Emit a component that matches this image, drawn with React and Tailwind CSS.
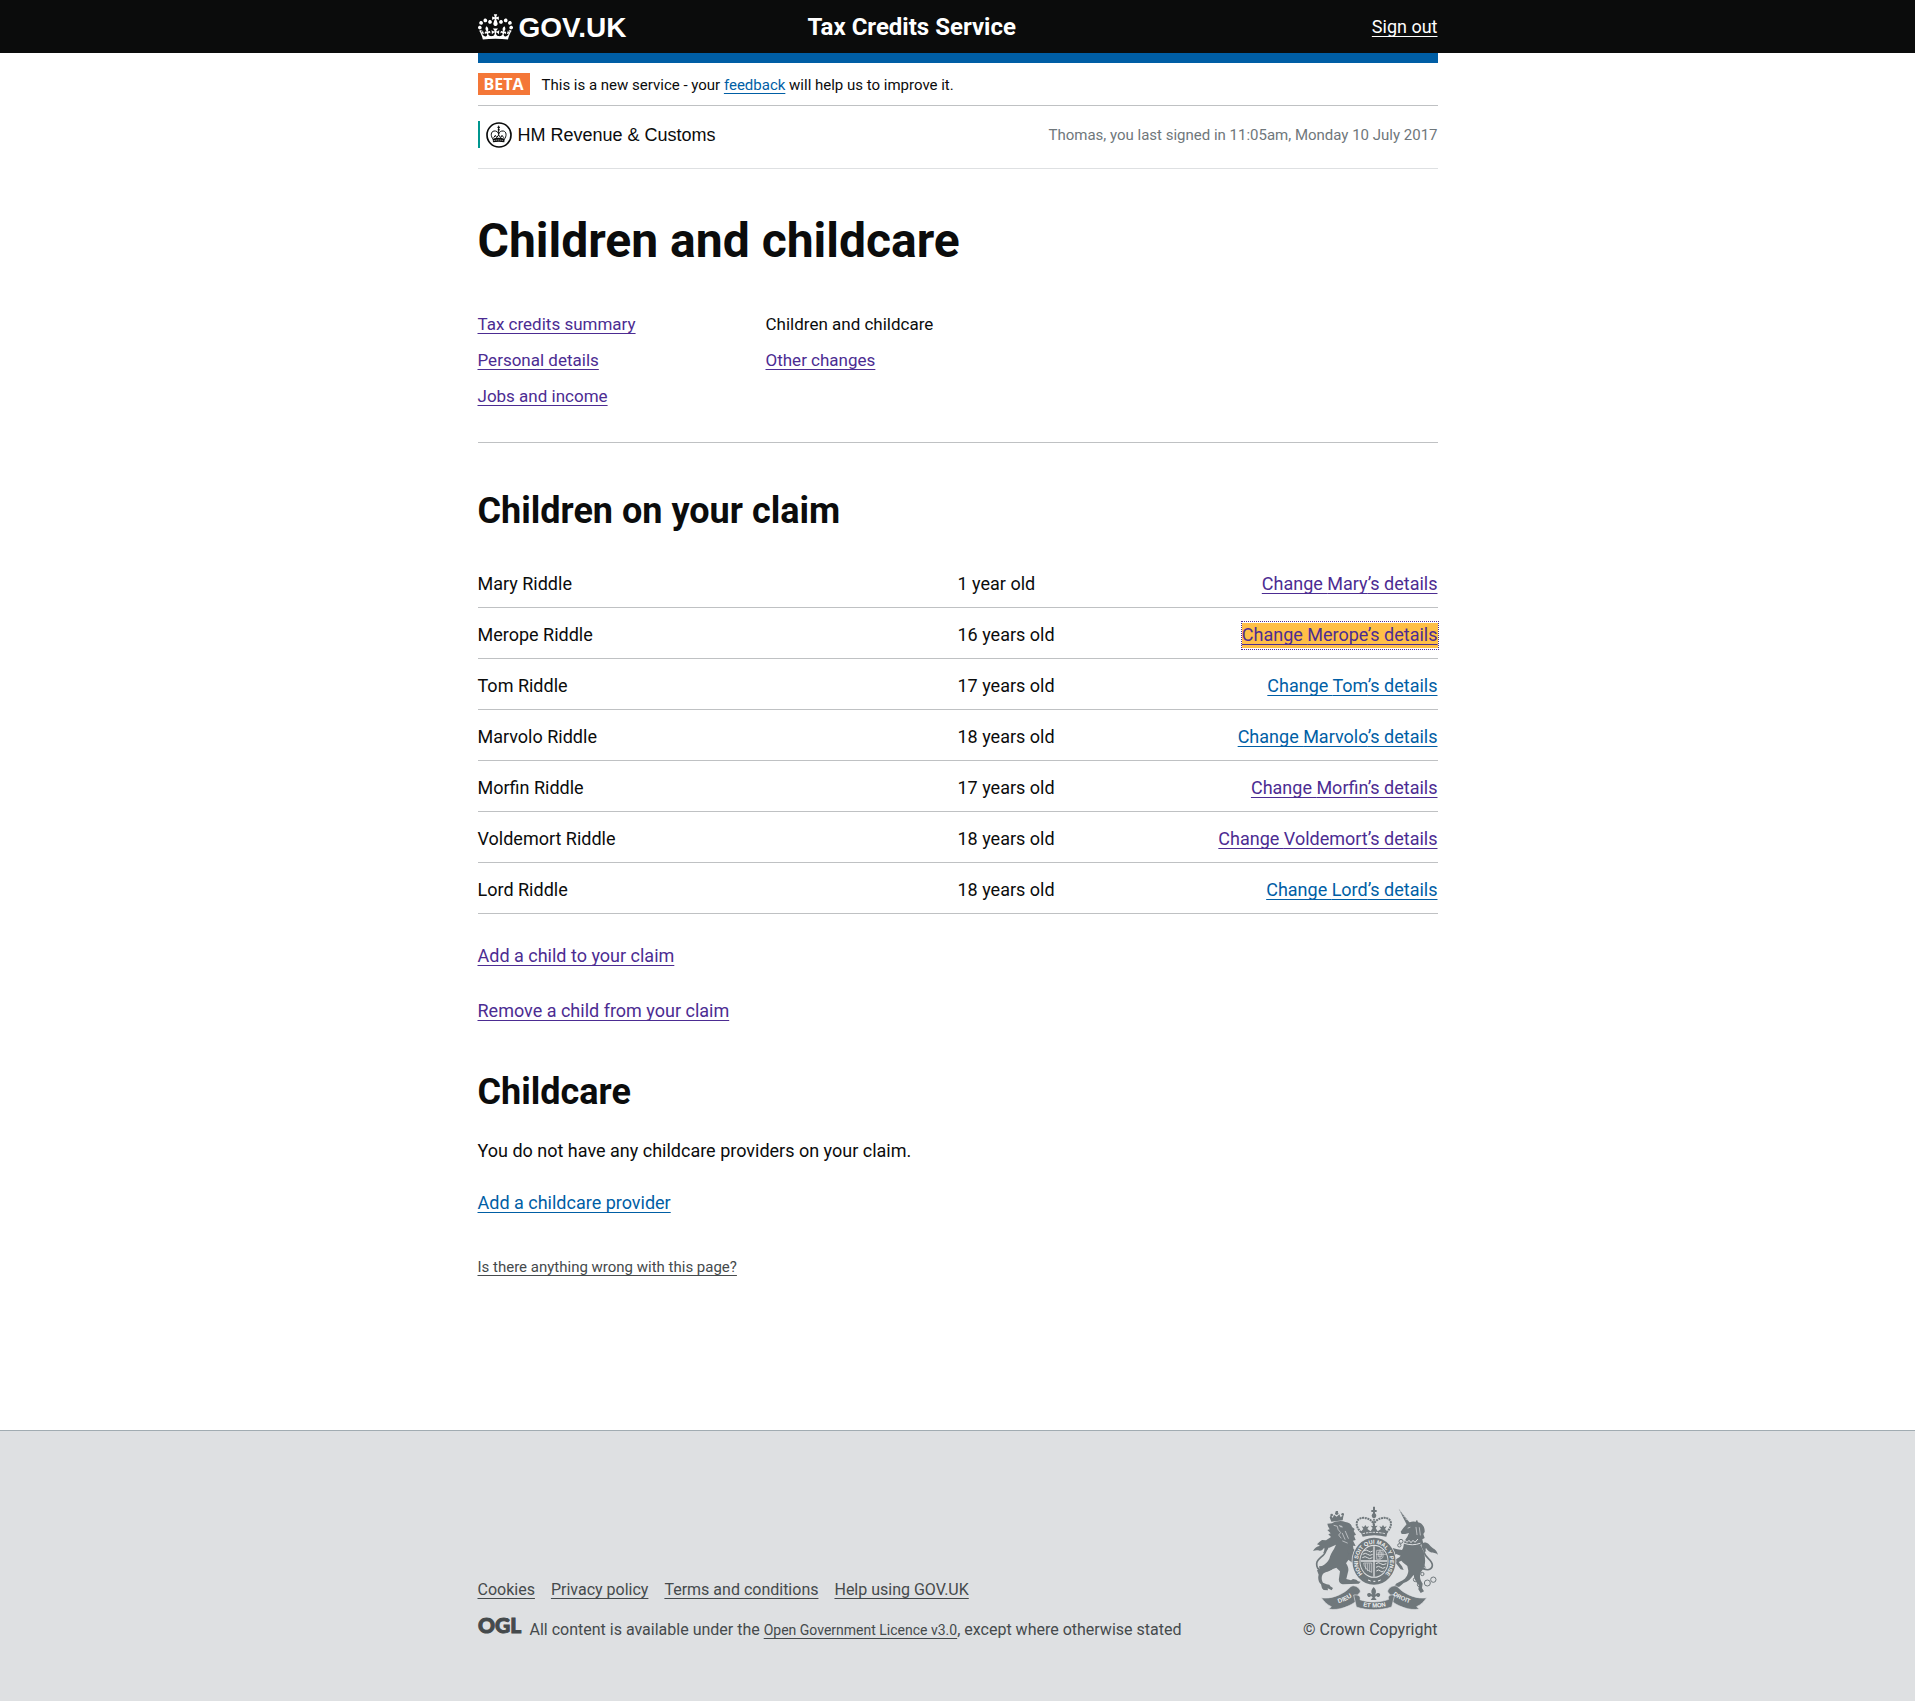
const navLinks = [
  ['Tax credits summary', 'Personal details', 'Jobs and income'],
  ['Children and childcare', 'Other changes'],
];

const children = [
  { first: 'Mary', age: '1 year old', state: 'visited' },
  { first: 'Merope', age: '16 years old', state: 'focused' },
  { first: 'Tom', age: '17 years old', state: 'new' },
  { first: 'Marvolo', age: '18 years old', state: 'new' },
  { first: 'Morfin', age: '17 years old', state: 'visited' },
  { first: 'Voldemort', age: '18 years old', state: 'visited' },
  { first: 'Lord', age: '18 years old', state: 'new' },
];

const footerLinks = ['Cookies', 'Privacy policy', 'Terms and conditions', 'Help using GOV.UK'];

const underline =
  'underline decoration-1 underline-offset-3 [text-decoration-skip-ink:none]';

const tones = {
  new: 'text-[#005ea5]',
  visited: 'text-[#4c2c92]',
  focused:
    'border-y border-transparent bg-[#ffbf47] bg-clip-padding pt-px pb-[3px] text-[#4c2c92] outline-1 outline-dotted outline-[#4c2c92]',
  muted: 'text-[#454a4c]',
  white: 'text-white',
};

function Link({ tone = 'new', children: label }) {
  return (
    <a href="#" className={`${underline} ${tones[tone]}`}>
      {label}
    </a>
  );
}

function Crown() {
  return (
    <svg viewBox="0 0 132 97" className="h-[26px] w-[35px]" fill="currentColor" aria-hidden="true">
      <path
        fillRule="evenodd"
        d="M25 30.2c3.5 1.5 7.7-.2 9.1-3.7 1.5-3.6-.2-7.8-3.9-9.2-3.6-1.4-7.6.3-9.1 3.9-1.4 3.5.3 7.5 3.9 9zM9 39.5c3.6 1.5 7.8-.2 9.2-3.7 1.5-3.6-.2-7.8-3.9-9.1-3.6-1.5-7.6.2-9.1 3.8-1.4 3.5.3 7.5 3.8 9zM4.4 57.2c3.5 1.5 7.7-.2 9.1-3.8 1.5-3.6-.2-7.7-3.9-9.1-3.5-1.5-7.6.3-9.1 3.8-1.4 3.5.3 7.6 3.9 9.1zm38.3-21.4c3.5 1.5 7.7-.2 9.1-3.8 1.5-3.6-.2-7.7-3.9-9.1-3.6-1.5-7.6.3-9.1 3.8-1.3 3.6.4 7.7 3.9 9.1zm64.4-5.6c-3.6 1.5-7.8-.2-9.1-3.7-1.5-3.6.2-7.8 3.8-9.2 3.6-1.4 7.7.3 9.2 3.9 1.3 3.5-.4 7.5-3.9 9zm15.9 9.3c-3.6 1.5-7.7-.2-9.1-3.7-1.5-3.6.2-7.8 3.7-9.1 3.6-1.5 7.7.2 9.2 3.8 1.5 3.5-.3 7.5-3.8 9zm4.7 17.7c-3.6 1.5-7.8-.2-9.2-3.8-1.5-3.6.2-7.7 3.9-9.1 3.6-1.5 7.7.3 9.2 3.8 1.3 3.5-.4 7.6-3.9 9.1zM89.3 35.8c-3.6 1.5-7.8-.2-9.2-3.8-1.4-3.6.2-7.7 3.9-9.1 3.6-1.5 7.7.3 9.2 3.8 1.4 3.6-.3 7.7-3.9 9.1zM69.7 17.7l8.9 4.7V9.3l-8.9 2.8c-.2-.3-.5-.6-.9-.9L72.4 0H59.6l3.5 11.2c-.3.3-.6.5-.9.9l-8.8-2.8v13.1l8.8-4.7c.3.3.6.7.9.9l-5 15.4v.1c-.2.8-.4 1.6-.4 2.4 0 4.1 3.1 7.5 7 8.1h.2c.3 0 .7.1 1 .1.4 0 .7 0 1-.1h.2c4-.6 7.1-4.1 7.1-8.1 0-.8-.1-1.7-.4-2.4V34l-5.1-15.4c.4-.2.7-.6 1-.9zM66 92.8c16.9 0 32.8 1.1 47.1 3.2 4-16.9 8.9-26.7 14-33.5l-9.6-3.4c1 4.9 1.1 7.2 0 10.2-1.5-1.4-3-4.3-4.2-8.7L108.6 76c2.8-2 5-3.2 7.5-3.3-4.4 9.4-10 11.9-13.6 11.2-4.3-.8-6.3-4.6-5.6-7.9 1-4.7 5.7-5.9 8-.5 4.3-8.7-3-11.4-7.6-8.8 7.1-7.2 7.9-13.5 2.1-21.1-8 6.1-8.1 12.3-4.5 20.8-4.7-5.4-12.1-2.5-9.5 6.2 3.4-5.2 7.9-2 7.2 3.1-.6 4.3-6.4 7.8-13.5 7.2-10.3-.9-10.9-8-11.2-13.8 2.5-.5 7.1 1.8 11 7.3L80.2 60c-4.1 4.4-8 5.3-12.3 5.4 1.4-4.4 8-11.6 8-11.6H55.5s6.4 7.2 7.9 11.6c-4.2-.1-8-1-12.3-5.4l1.4 16.4c3.9-5.5 8.5-7.7 10.9-7.3-.3 5.8-.9 12.8-11.1 13.8-7.2.6-12.9-2.9-13.5-7.2-.7-5 3.8-8.3 7.1-3.1 2.7-8.7-4.6-11.6-9.4-6.2 3.7-8.5 3.6-14.7-4.6-20.8-5.8 7.6-5 13.9 2.2 21.1-4.7-2.6-11.9.1-7.7 8.8 2.3-5.5 7.1-4.2 8.1.5.7 3.3-1.3 7.1-5.7 7.9-3.5.7-9-1.8-13.5-11.2 2.5.1 4.7 1.3 7.5 3.3l-4.7-15.4c-1.2 4.4-2.7 7.2-4.3 8.7-1.1-3-.9-5.3 0-10.2l-9.5 3.4c5 6.9 9.9 16.7 14 33.5 14.8-2.1 30.8-3.2 47.7-3.2z"
      />
    </svg>
  );
}

function HmrcCrest() {
  return (
    <svg viewBox="0 0 78 81" className="h-[27px] w-[26px]" aria-hidden="true">
      <circle cx="39" cy="42" r="36" fill="#fff" stroke="#0b0c0c" strokeWidth="5" />
      <g fill="none" stroke="#0b0c0c" strokeWidth="3">
        <path d="M22 56C13 45 14 32 24 30c7-1 12 3 14 9 2-6 7-10 14-9 10 2 11 15 2 26" />
        <path d="M38 24v18M34 19h8M38 14v10" />
        <path d="M23 50l5-7 4 7 6-8 6 8 4-7 5 7" />
      </g>
      <circle cx="38" cy="26" r="3" fill="#0b0c0c" />
      <path d="M20 53q18-5 36 0l-1 11q-17-4-34 0z" fill="#0b0c0c" />
      <path d="M23 59q15-4 30 0" fill="none" stroke="#fff" strokeWidth="2" strokeDasharray="4 2" />
    </svg>
  );
}

function RoyalArms() {
  return (
    <svg viewBox="9 16 375 312" className="h-[104px] w-[125px]" aria-hidden="true">
      <defs>
        <path id="garter" d="M158 220A48 53 0 1 1 226 220" />
        <path id="dieu" d="M78 310Q115 301 142 276" />
        <path id="mon" d="M150 314Q192 327 234 314" />
        <path id="droit" d="M244 278Q270 301 310 310" />
      </defs>

      {/* Tails */}
      <g fill="none" stroke="#6f777b" strokeLinecap="round">
        <path d="M64 205C42 219 19 209 20 189c1-17 24-22 27-37 2-8-2-15-8-18" strokeWidth="5" />
        <path d="M335 199c10 12 30 11 32-4 2-16-20-23-24-38-2-10 3-19 9-23" strokeWidth="5" />
      </g>
      <path
        d="M57 128c-10-8-22-3-29 8-7 2-14 5-19 15 8-3 14-2 20-1 7 0 11-5 14-12 1 7 0 14-4 20 12-4 20-16 18-30z"
        fill="#6f777b"
      />
      <path
        d="M335 139c-2-9 5-15 14-13 8 2 10 9 18 15 8 5 15 10 17 22-7-8-14-5-22-8-8-4-12-9-15-15-2 5 0 9 2 14-7-3-12-8-14-15z"
        fill="#6f777b"
      />

      {/* Lion */}
      <g fill="#6f777b">
        <path d="M63 44l5 8 4-10 8 6 8-7 4 9 9-8-3 17-34 4-5-13z" />
        <circle cx="80" cy="38" r="5" />
        <circle cx="65" cy="43" r="4" />
        <circle cx="98" cy="41" r="4" />
        <path d="M77 31h7v4h-7z" />
        <path d="M66 68c11-7 29-9 40-4 11 1 19 7 20 15l8 6-3 6 7 11-6 3 5 13-8 2 8 16-8-1c3 15 2 25-9 36l-12 17c6 8 9 18 6 26l-5 21 14 4 6-4 10 2 5 5 8 1-6 6-48 2c-8-2-13-9-11-18l3-21-11-11-20 8-18 9c-8 8-7 20-2 28l11 5 8 1 3 5 8 5-4 7-12-6 1 6-13-1-5-5-3-12c-8-7-10-19-7-29l-5-13 8-3-2-9 9-1c9-5 18-12 22-22 3-12 8-20 14-29l6-13-20 9-12-2-8 6-4-7-5 3v-7l-8-3 7-7 8-6 12 1 15-10-8-8 7-3-10-10 7-2-5-9-2-8z" />
        <path d="M118 137l21 14 7 19-6 10-20-15-9-14z" />
        <path d="M118 158c9 10 20 12 30 20l5 8-9 1-4 9-9-3-6-8-16-12z" />
      </g>
      <g fill="none" stroke="#dee0e2" strokeWidth="2" strokeLinecap="round">
        <path d="M72 74l10 3 2 9 8 10-6 7 7 9" />
        <path d="M88 75l7 2M91 78l6 1" />
        <path d="M97 98l8 18M106 92l9 21M98 121l14 6" />
      </g>

      {/* Unicorn */}
      <g fill="#6f777b">
        <path d="M266 24l34 43-9 7z" />
        <path d="M290 71C298 64 308 61 316 64L321 57L324 65C338 68 345 80 344 94L340 100L344 112L337 116L340 130L331 133C341 148 347 168 345 186C344 202 336 208 331 218C328 228 331 240 338 249L336 262L342 272L332 277L325 266L327 254C318 244 312 234 311 222C303 234 294 243 281 247L268 258L252 260L258 249L272 242C286 236 294 224 295 210L292 196C286 190 279 186 274 180L266 184L276 197L281 208L272 206L258 188L254 178L268 170L272 165L258 160L252 166L243 160L240 150L248 142L262 146L276 148C282 140 280 130 284 120L292 108L297 97L286 100L275 100L272 93L280 82Z" />
      </g>
      <g fill="none" stroke="#dee0e2" strokeLinecap="round">
        <path d="M270 31l4 2M276 39l4 2M281 47l5 2M287 55l5 2" strokeWidth="2" />
        <path d="M283 128q24 9 47 0" strokeWidth="3" />
        <path d="M285 119l6 6 6-6 6 7 6-7 6 6 8-9" strokeWidth="3" />
        <path d="M294 82l6-2M318 80l3 22M328 81l3 22" strokeWidth="2" />
      </g>
      <g fill="none" stroke="#6f777b" strokeWidth="3">
        <circle cx="273" cy="122" r="6" />
        <circle cx="268" cy="134" r="5" />
        <circle cx="339" cy="200" r="6" />
        <circle cx="337" cy="220" r="5" />
        <circle cx="316" cy="237" r="6" />
        <circle cx="328" cy="252" r="6" />
        <circle cx="352" cy="247" r="9" />
        <circle cx="370" cy="237" r="8" />
      </g>

      {/* Motto scroll */}
      <g fill="#6f777b" stroke="#dee0e2" strokeWidth="2">
        <path d="M34 291C60 296 98 284 122 258C132 250 152 262 151 274L141 285L147 296C120 318 85 331 56 325L64 318C50 312 42 302 34 291Z" />
        <path d="M350 291C324 296 286 284 262 258C252 250 232 262 233 274L243 285L237 296C264 318 299 331 328 325L320 318C334 312 342 302 350 291Z" />
        <path d="M131 283c14-2 22 4 19 14 26 9 57 10 86-1-4-9 4-16 18-13l-9 36c-34 11-74 11-106 0z" />
      </g>
      <g
        fill="#eef0f1"
        fontFamily="Liberation Sans, sans-serif"
        fontWeight="700"
      >
        <text fontSize="19"><textPath href="#dieu" startOffset="8">DIEU</textPath></text>
        <text fontSize="18"><textPath href="#mon" startOffset="9">ET MON</textPath></text>
        <text fontSize="18"><textPath href="#droit" startOffset="6">DROIT</textPath></text>
      </g>
      <path
        d="M191 259c8 8 9 15 4 23 9-9 18-5 15 3-2 5-8 6-11 1l-5 4 6 8h-18l6-8-5-4c-3 5-9 4-11-1-3-8 6-12 15-3-5-8-4-15 4-23z"
        fill="#6f777b"
      />

      {/* Garter and shield */}
      <ellipse cx="192" cy="182" rx="67" ry="73" fill="#dee0e2" />
      <ellipse cx="192" cy="182" rx="54" ry="60" fill="none" stroke="#6f777b" strokeWidth="21" />
      <text
        fill="#eef0f1"
        fontFamily="Liberation Sans, sans-serif"
        fontSize="17"
        fontWeight="700"
      >
        <textPath href="#garter">HONI SOIT QUI MAL Y PENSE</textPath>
      </text>
      <path d="M174 238l8 3M190 242h6M204 241l8-3" stroke="#eef0f1" strokeWidth="3" />
      <ellipse cx="192" cy="182" rx="41" ry="46" fill="#6f777b" />
      <g fill="none" stroke="#dee0e2">
        <path d="M192 137v91M152 181h80" strokeWidth="4" />
        <path
          d="M161 151q8-6 14 0t13 0M158 161q9-6 15 0t15 0M157 171q9-6 15 0t15 0M198 189q8-6 14 0t17 0M198 200q8-6 14 0t14 0M199 211q7-6 12 0t10 0"
          strokeWidth="3"
        />
        <path d="M200 149h19v21q-4 7-19 6zM205 154h10v14h-10zM210 146v30M198 161h30" strokeWidth="2" />
        <path d="M161 187h24v28q-16-5-22-20zM167 188v18M173 188v23M179 188v25" strokeWidth="2" />
      </g>

      {/* Crown */}
      <g fill="none" stroke="#6f777b">
        <path d="M154 95C136 81 136 58 151 53c16-5 35 3 40 18 6-15 25-23 41-18 15 5 15 28-3 42" strokeWidth="6" strokeDasharray="6 2" />
        <path d="M192 48v46" strokeWidth="5" strokeDasharray="5 2" />
        <path d="M184 31h16M192 18v23" strokeWidth="6" />
      </g>
      <g fill="#6f777b">
        <circle cx="192" cy="45" r="7" />
        <path d="M152 94l8-9-5-8 7 2 4-6 4 6 7-2-5 8 10 7 6-10-6-7 7 1 3-7 4 7 7-1-6 7 6 10 10-7-5-8 7 2 4-6 4 6 7-2-5 8 8 9-4 14q-36-9-71 0z" />
      </g>
      <path d="M158 99q34-8 67 0" fill="none" stroke="#dee0e2" strokeWidth="3" strokeDasharray="7 3" />
    </svg>
  );
}

function OglLogo() {
  return (
    <svg viewBox="0 0 48 28" className="h-7 w-12 overflow-visible" role="img" aria-label="Open Government Licence">
      <text
        x="0"
        y="21"
        fill="#454a4c"
        stroke="#454a4c"
        strokeWidth="1"
        fontFamily="Lato, sans-serif"
        fontSize="21"
        fontWeight="900"
      >
        OGL
      </text>
    </svg>
  );
}

export default function App() {
  return (
    <div className="flex min-h-screen flex-col bg-white font-[Roboto,sans-serif] text-lg/[25px] text-[#0b0c0c]">
      <header className="bg-[#0b0c0c] text-white">
        <div className="mx-auto grid h-[53px] w-full max-w-[960px] grid-cols-[330px_1fr_auto] items-center">
          <a href="#" className="flex items-center gap-1.5 font-['Liberation_Sans',sans-serif] text-[28px]/8 font-bold">
            <Crown />
            <span className="pt-0.5">GOV.UK</span>
          </a>
          <span className="text-2xl/8 font-bold">Tax Credits Service</span>
          <Link tone="white">Sign out</Link>
        </div>
      </header>

      <main className="mx-auto w-full max-w-[960px] flex-1 pb-[153px]">
        <div className="h-2.5 bg-[#005ea5]" />
        <div className="flex items-center gap-3 border-b border-[#bfc1c3] py-2.5 text-[15px]/5">
          <strong className="bg-[#f47738] px-1.5 font-['Open_Sans',sans-serif] text-base/[22px] font-bold text-white">
            BETA
          </strong>
          <p className="pt-0.5">
            This is a new service - your <Link>feedback</Link> will help us to improve it.
          </p>
        </div>
        <div className="flex items-center justify-between border-b border-[#dee0e2] pt-[15px] pb-5">
          <div className="flex items-center border-l-2 border-[#00968f] pl-1.5 font-['Liberation_Sans',sans-serif] text-lg/[25px]">
            <HmrcCrest />
            <span className="ml-1.5 pt-0.5">HM Revenue &amp; Customs</span>
          </div>
          <p className="pt-0.5 text-[15px]/[25px] text-[#6f777b]">
            Thomas, you last signed in 11:05am, Monday 10 July 2017
          </p>
        </div>

        <h1 className="mt-[47px] text-5xl/[50px] font-bold">Children and childcare</h1>

        <nav className="mt-10 grid grid-cols-[30%_1fr] border-b border-[#bfc1c3] pb-7 text-[17px]/9">
          {navLinks.map((column) => (
            <ul key={column[0]}>
              {column.map((label) => (
                <li key={label}>
                  {label === 'Children and childcare' ? label : <Link tone="visited">{label}</Link>}
                </li>
              ))}
            </ul>
          ))}
        </nav>

        <h2 className="mt-12 text-4xl/10 font-bold">Children on your claim</h2>
        <table className="mt-[26px] w-full table-fixed border-separate border-spacing-0">
          <tbody>
            {children.map((child) => (
              <tr key={child.first}>
                <td className="w-1/2 border-b border-[#bfc1c3] pt-3.5 pb-[11px]">{child.first} Riddle</td>
                <td className="w-1/5 border-b border-[#bfc1c3] pt-3.5 pb-[11px]">{child.age}</td>
                <td className="border-b border-[#bfc1c3] pt-3.5 pb-[11px] text-right">
                  <Link tone={child.state}>Change {child.first}’s details</Link>
                </td>
              </tr>
            ))}
          </tbody>
        </table>
        <p className="mt-[29px]">
          <Link tone="visited">Add a child to your claim</Link>
        </p>
        <p className="mt-[30px]">
          <Link tone="visited">Remove a child from your claim</Link>
        </p>

        <h2 className="mt-[49px] text-4xl/10 font-bold">Childcare</h2>
        <p className="mt-[26px]">You do not have any childcare providers on your claim.</p>
        <p className="mt-[27px]">
          <Link>Add a childcare provider</Link>
        </p>
        <p className="mt-[42px] text-[15px]/5">
          <Link tone="muted">Is there anything wrong with this page?</Link>
        </p>
      </main>

      <footer className="border-t border-[#a1acb2] bg-[#dee0e2] text-base/5 text-[#454a4c]">
        <div className="mx-auto flex w-full max-w-[960px] items-end justify-between pt-[75px] pb-[61px]">
          <div className="flex flex-col gap-5">
            <ul className="flex gap-4">
              {footerLinks.map((label) => (
                <li key={label}>
                  <Link tone="muted">{label}</Link>
                </li>
              ))}
            </ul>
            <div className="flex h-5 items-end gap-1">
              <OglLogo />
              <p>
                All content is available under the{' '}
                <span className="text-sm/5">
                  <Link tone="muted">Open Government Licence v3.0</Link>
                </span>
                , except where otherwise stated
              </p>
            </div>
          </div>
          <div className="flex flex-col items-end gap-2.5">
            <RoyalArms />
            <p>© Crown Copyright</p>
          </div>
        </div>
      </footer>
    </div>
  );
}
